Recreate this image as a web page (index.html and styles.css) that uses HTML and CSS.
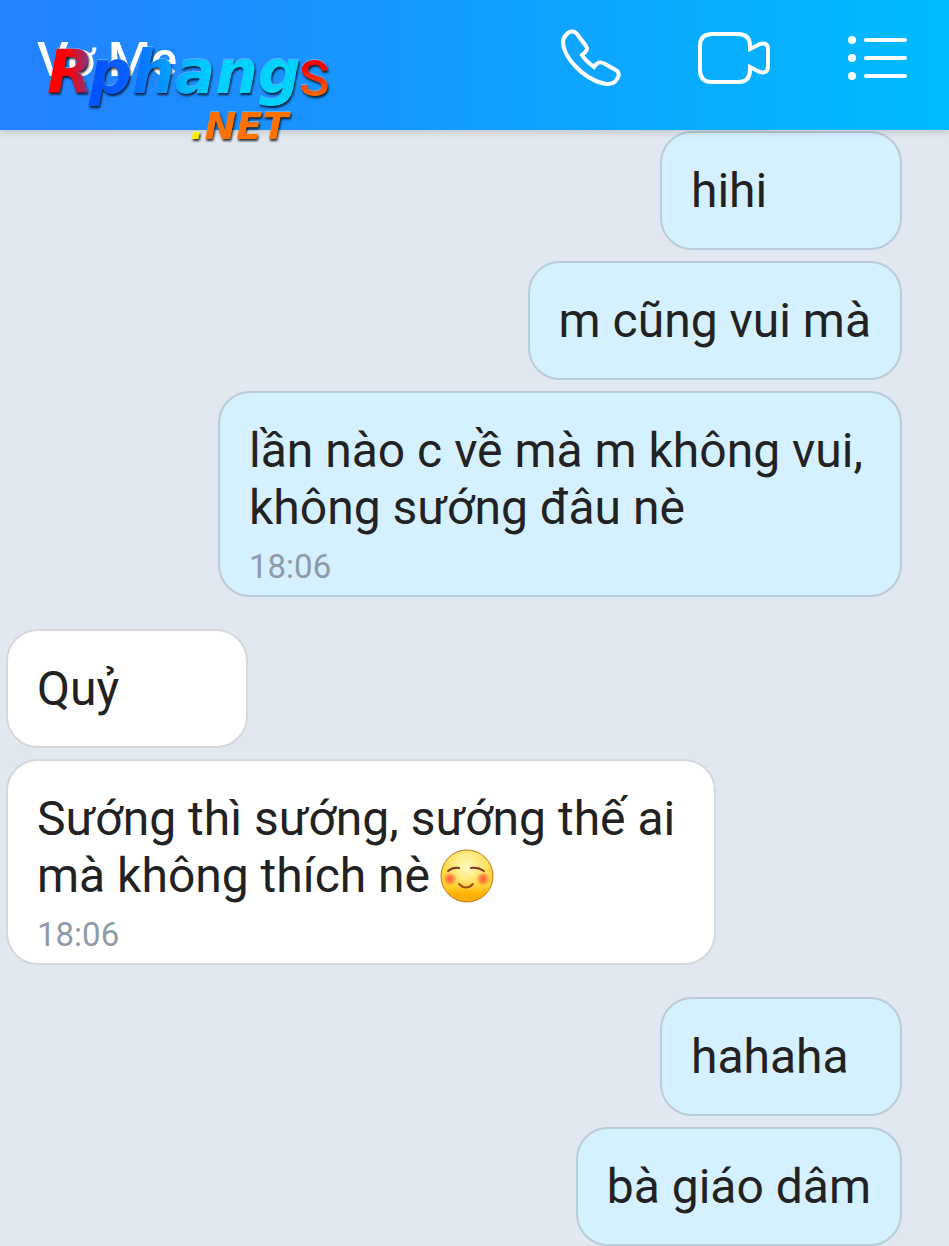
FILE: index.html
```html
<!DOCTYPE html>
<html lang="vi">
<head>
    <meta charset="UTF-8">
    <meta name="viewport" content="width=device-width, initial-scale=1.0">
    <title>Vợ Me</title>
    <link rel="stylesheet" href="styles.css">
</head>
<body>
    <header class="header">
        <h1 class="title">Vợ Me</h1>
        <div class="actions">
            <button class="action" aria-label="Gọi thoại">
                <svg width="60" height="58" viewBox="0 0 60 58">
                    <path d="M5 6C8 2 13 1 16 5L25 17C27 20 26 22 21 26C24 31 29 35 33 38C36 33 39 32 44 35L53 40C58 42 59 46 56 50C53 55 48 56 41 54C22 49 2 28 2 13C2 10 3 8 5 6Z"/>
                </svg>
            </button>
            <button class="action" aria-label="Gọi video">
                <svg width="72" height="54" viewBox="0 0 72 54">
                    <path d="M14 3H40Q52 3 52 15V18L62 13Q70 11 70 18V35Q70 43 62 41L52 36V39Q52 51 40 51H14Q2 51 2 39V15Q2 3 14 3Z"/>
                </svg>
            </button>
            <button class="action" aria-label="Tùy chọn">
                <svg width="60" height="46" viewBox="0 0 60 46">
                    <path d="M19 5H58M19 23H58M19 41H58"/>
                    <circle cx="5" cy="5" r="4"/>
                    <circle cx="5" cy="23" r="4"/>
                    <circle cx="5" cy="41" r="4"/>
                </svg>
            </button>
        </div>
        <svg class="logo" width="300" height="110" viewBox="0 0 300 110">
            <defs>
                <linearGradient id="red" x1="0" x2="1" y1="0" y2="0">
                    <stop offset="0.45" stop-color="#ff0000"/>
                    <stop offset="1" stop-color="#6b3f9c"/>
                </linearGradient>
                <linearGradient id="blue" x1="0" x2="1" y1="0" y2="0">
                    <stop offset="0" stop-color="#0050ff"/>
                    <stop offset="0.18" stop-color="#0a60ff"/>
                    <stop offset="0.45" stop-color="#00b4ff"/>
                    <stop offset="0.6" stop-color="#00d2ff"/>
                </linearGradient>
                <linearGradient id="fire" x1="0" x2="0" y1="0" y2="1">
                    <stop offset="0.3" stop-color="#ff0000"/>
                    <stop offset="0.8" stop-color="#ff7000"/>
                </linearGradient>
            </defs>
            <text class="logo-name" x="7" y="63" fill="url(#red)">R</text>
            <text class="logo-name" x="49" y="63" fill="url(#blue)">phang</text>
            <text class="logo-end" x="259" y="66" fill="url(#fire)">S</text>
            <text class="logo-domain" x="150" y="109"><tspan class="logo-dot">.</tspan>NET</text>
        </svg>
    </header>

    <main class="chat">
        <div class="group sent">
            <p class="bubble">hihi</p>
            <p class="bubble">m cũng vui mà</p>
            <div class="bubble timed">
                <p>lần nào c về mà m không vui, không sướng đâu nè</p>
                <time>18:06</time>
            </div>
        </div>
        <div class="group received">
            <p class="bubble">Quỷ</p>
            <div class="bubble timed">
                <p>Sướng thì sướng, sướng thế ai mà không thích nè
                    <svg class="emoji" width="54" height="54" viewBox="0 0 54 54" role="img" aria-label="Mỉm cười">
                        <defs>
                            <linearGradient id="face" x1="0" x2="0" y1="0" y2="1">
                                <stop offset="0" stop-color="#ffe36a"/>
                                <stop offset="0.7" stop-color="#ffd02e"/>
                                <stop offset="0.85" stop-color="#ffb000"/>
                                <stop offset="1" stop-color="#ffa91a"/>
                            </linearGradient>
                            <radialGradient id="shine" cx="0.5" cy="0.33" r="0.45">
                                <stop offset="0" stop-color="#fffcc0"/>
                                <stop offset="1" stop-color="#fffcc0" stop-opacity="0"/>
                            </radialGradient>
                            <radialGradient id="cheek">
                                <stop offset="0" stop-color="#ff5a3c"/>
                                <stop offset="0.5" stop-color="#ff6a3c" stop-opacity="0.7"/>
                                <stop offset="1" stop-color="#ff7a3c" stop-opacity="0"/>
                            </radialGradient>
                        </defs>
                        <circle cx="27" cy="27" r="26" fill="url(#face)" stroke="#c07814" stroke-width="1"/>
                        <circle cx="27" cy="27" r="25" fill="url(#shine)"/>
                        <circle cx="10" cy="30" r="7" fill="url(#cheek)"/>
                        <circle cx="43" cy="30" r="7" fill="url(#cheek)"/>
                        <path d="M8 22Q13 18 19 19M31 19Q38 18 44 22" fill="none" stroke="#7d3524" stroke-width="2" stroke-linecap="round"/>
                        <path d="M19 35Q26 42 33 35" fill="none" stroke="#a34a14" stroke-width="2" stroke-linecap="round"/>
                    </svg>
                </p>
                <time>18:06</time>
            </div>
        </div>
        <div class="group sent">
            <p class="bubble">hahaha</p>
            <p class="bubble">bà giáo dâm</p>
        </div>
    </main>
</body>
</html>
```
FILE: styles.css
```css
* {
    box-sizing: border-box;
}

body {
    margin: 0;
    background-color: #e2e8f0;
    color: #222;
    font-family: Roboto, "Liberation Sans", sans-serif;
    font-size: 48px;
    line-height: 57px;
}

.header {
    position: relative;
    z-index: 1;
    display: flex;
    align-items: flex-start;
    justify-content: space-between;
    height: 130px;
    padding: 29px 42px 0 37px;
    background: linear-gradient(to right, #2480ff, #00bcff);
    box-shadow: 0 1px 8px rgba(0, 0, 0, 0.2);
}

.title {
    margin: 0;
    color: #fff;
    font-size: 49px;
    font-weight: 500;
    line-height: 62px;
}

.actions {
    display: flex;
    align-items: center;
    gap: 77px;
}

.action {
    display: block;
    padding: 0;
    border: none;
    background: none;
    cursor: pointer;
}

.action svg {
    display: block;
    fill: none;
    stroke: #fff;
    stroke-width: 4;
    stroke-linecap: round;
}

.action circle {
    fill: #fff;
    stroke: none;
}

/* watermark over the header edge */
.logo {
    position: absolute;
    top: 30px;
    left: 40px;
    overflow: visible;
    filter: drop-shadow(0 -1px 0 rgba(255, 255, 255, 0.3)) drop-shadow(1px 2px 1px rgba(0, 0, 0, 0.8));
}

.logo-name,
.logo-domain {
    font-family: "DejaVu Sans", sans-serif;
    font-style: italic;
    font-weight: bold;
}

.logo-name {
    font-size: 60px;
}

.logo-end {
    font-size: 50px;
    font-weight: 500;
}

.logo-domain {
    font-size: 38px;
    fill: #ff7200;
}

.logo-dot {
    fill: #fff200;
}

.chat {
    display: flex;
    flex-direction: column;
    gap: 32px;
    padding: 1px 0;
}

.group {
    display: flex;
    flex-direction: column;
    align-items: flex-start;
    gap: 11px;
    padding-left: 6px;
}

.sent {
    align-items: flex-end;
    padding: 0 47px 0 0;
}

.bubble {
    min-width: 242px;
    max-width: 710px;
    margin: 0;
    padding: 29px;
    border: 2px solid #d6d8da;
    border-radius: 32px;
    background-color: #fff;
}

.sent .bubble {
    max-width: 684px;
    border-color: #b9ccd8;
    background-color: #d5f0ff;
}

.bubble p {
    margin: 0;
}

.timed {
    padding-bottom: 8px;
}

.bubble time {
    display: block;
    margin-top: 11px;
    color: #8e9ba7;
    font-size: 33px;
    line-height: 40px;
}

.emoji {
    display: inline-block;
    vertical-align: -11px;
    margin: -8px 0 0 -2px;
}
```
